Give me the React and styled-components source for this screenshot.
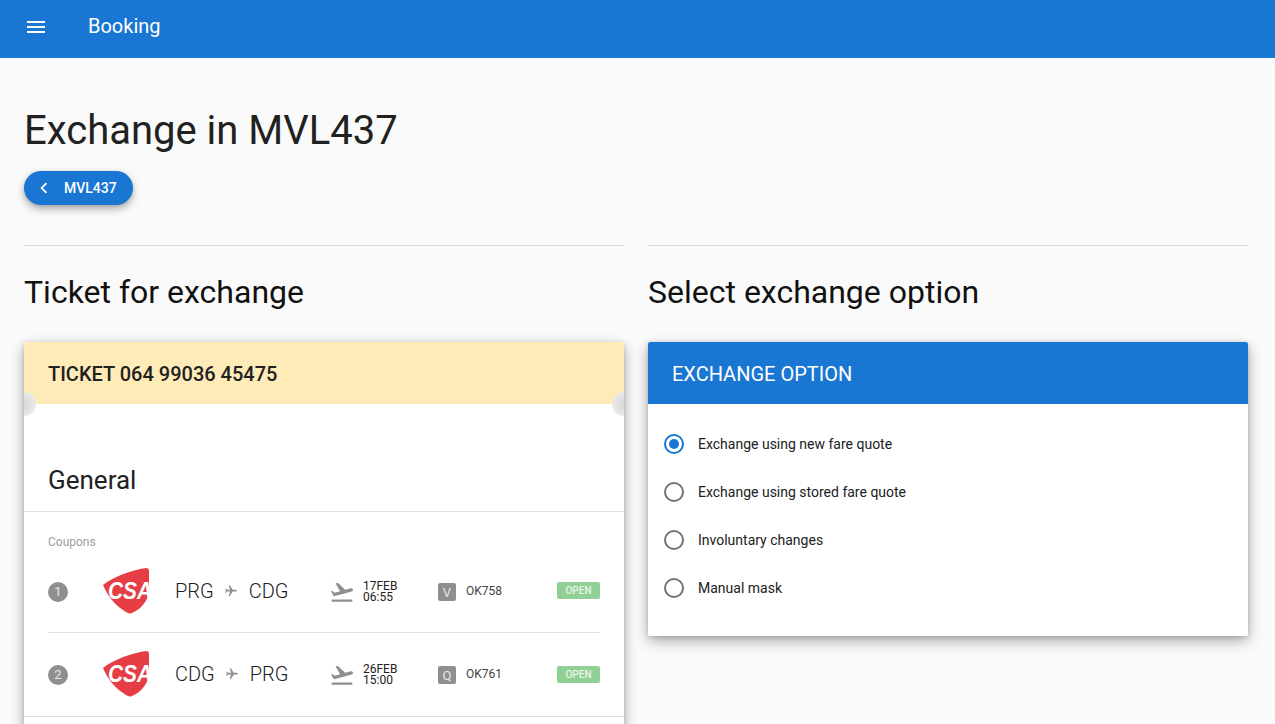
import React from "react";
import styled, { createGlobalStyle } from "styled-components";
import { MdMenu, MdChevronLeft, MdFlight, MdFlightTakeoff } from "react-icons/md";

const coupons = [
  { id: 1, from: "PRG", to: "CDG", date: "17FEB", time: "06:55", cabin: "V", flight: "OK758" },
  { id: 2, from: "CDG", to: "PRG", date: "26FEB", time: "15:00", cabin: "Q", flight: "OK761" },
];

const options = [
  "Exchange using new fare quote",
  "Exchange using stored fare quote",
  "Involuntary changes",
  "Manual mask",
];

const App = () => {
  return (
    <>
      <GlobalStyle />
      <Header>
        <MenuButton>
          <MdMenu size={24} />
        </MenuButton>
        <AppTitle>Booking</AppTitle>
      </Header>
      <Main>
        <PageTitle>Exchange in MVL437</PageTitle>
        <BackButton>
          <MdChevronLeft size={22} />
          MVL437
        </BackButton>
        <Columns>
          <Column>
            <SectionTitle>Ticket for exchange</SectionTitle>
            <Card>
              <TicketHeader>TICKET 064 99036 45475</TicketHeader>
              <Notch $side="left" />
              <Notch $side="right" />
              <CardTitle>General</CardTitle>
              <CouponsLabel>Coupons</CouponsLabel>
              <CouponList>
                {coupons.map((c) => (
                  <CouponRow key={c.id}>
                    <CouponNumber>{c.id}</CouponNumber>
                    <AirlineLogo />
                    <Route>
                      {c.from}
                      <RouteIcon>
                        <MdFlight size={14} />
                      </RouteIcon>
                      {c.to}
                    </Route>
                    <TakeoffIcon>
                      <MdFlightTakeoff size={26} />
                    </TakeoffIcon>
                    <DateTime>
                      {c.date}
                      <br />
                      {c.time}
                    </DateTime>
                    <CabinBox>{c.cabin}</CabinBox>
                    <FlightNo>{c.flight}</FlightNo>
                    <StatusTag>OPEN</StatusTag>
                  </CouponRow>
                ))}
              </CouponList>
              <CardRest />
            </Card>
          </Column>
          <Column>
            <SectionTitle>Select exchange option</SectionTitle>
            <Card>
              <OptionHeader>EXCHANGE OPTION</OptionHeader>
              <OptionList>
                {options.map((label, i) => (
                  <OptionRow key={label}>
                    <Radio $checked={i === 0} />
                    {label}
                  </OptionRow>
                ))}
              </OptionList>
            </Card>
          </Column>
        </Columns>
      </Main>
    </>
  );
};

const AirlineLogo = () => (
  <LogoSvg viewBox="0 0 46 46" width="46" height="46">
    <path
      d="M0 17 C10 9 28 2 43 0 C45 0 46 1 46 3 L46 24 C45 33 37 42 29 45 C27 46 25 45.500 23 44 C13 38 5 29 0 17 Z"
      fill="#e53e44"
    />
    <LogoText x="5" y="31" textLength="44" lengthAdjust="spacingAndGlyphs">
      CSA
    </LogoText>
  </LogoSvg>
);

const GlobalStyle = createGlobalStyle`
  html, body {
    margin: 0;
    height: 724px;
    overflow: hidden;
    background: #fafafa;
    font-family: Roboto, "Liberation Sans", sans-serif;
    color: #212121;
  }
`;

const Header = styled.header`
  height: 58px;
  background: #1976d2;
  color: #fff;
  display: flex;
  align-items: center;
  padding-left: 24px;
`;

const MenuButton = styled.div`
  display: flex;
  width: 64px;
  margin-top: -4px;
`;

const AppTitle = styled.div`
  font-size: 20px;
  margin-top: -6px;
`;

const Main = styled.main`
  padding: 49px 27px 0 24px;
`;

const PageTitle = styled.h1`
  margin: 0;
  font-size: 40px;
  line-height: 48px;
  font-weight: 400;
  color: #212121;
`;

const BackButton = styled.div`
  margin-top: 16px;
  width: 109px;
  height: 34px;
  box-sizing: border-box;
  padding-left: 9px;
  display: flex;
  align-items: center;
  gap: 9px;
  border-radius: 17px;
  background: #1976d2;
  color: #fff;
  font-size: 14px;
  font-weight: 500;
  box-shadow: 0 4px 8px rgba(0, 0, 0, 0.3), 0 1px 3px rgba(0, 0, 0, 0.12);
`;

const Columns = styled.div`
  display: grid;
  grid-template-columns: 600px 600px;
  gap: 24px;
  margin-top: 40px;
`;

const Column = styled.section`
  border-top: 1px solid #dcdcdc;
`;

const SectionTitle = styled.h2`
  margin: 26px 0 30px;
  font-size: 32px;
  line-height: 40px;
  font-weight: 400;
  color: #111;
`;

const Card = styled.div`
  position: relative;
  background: #fff;
  border-radius: 2px;
  box-shadow: 0 5px 14px rgba(0, 0, 0, 0.32), 0 1px 5px rgba(0, 0, 0, 0.14);
`;

const TicketHeader = styled.div`
  height: 62px;
  box-sizing: border-box;
  padding: 1px 24px 0;
  display: flex;
  align-items: center;
  background: #ffebb8;
  border-radius: 2px 2px 0 0;
  font-size: 20px;
  font-weight: 500;
  color: #212121;
`;

const Notch = styled.div`
  position: absolute;
  top: 50px;
  ${({ $side }) => ($side === "left" ? "left: -12px;" : "right: -12px;")}
  width: 24px;
  height: 24px;
  border-radius: 50%;
  background: radial-gradient(circle at center, #d6d6d6 0%, #f2f2f2 100%);
  clip-path: ${({ $side }) =>
    $side === "left" ? "inset(0 0 0 12px)" : "inset(0 12px 0 0)"};
`;

const CardTitle = styled.div`
  height: 108px;
  box-sizing: border-box;
  padding: 59px 24px 0;
  border-bottom: 1px solid #e0e0e0;
  font-size: 26px;
  line-height: 34px;
  color: #212121;
`;

const CouponsLabel = styled.div`
  margin: 23px 24px 0;
  font-size: 12px;
  line-height: 14px;
  color: #9e9e9e;
`;

const CouponList = styled.div`
  margin: 0 24px;
`;

const CouponRow = styled.div`
  height: 84px;
  box-sizing: border-box;
  padding-top: 2px;
  display: grid;
  grid-template-columns: 55px 72px 156px 32px 75px 28px 91px 43px;
  align-items: center;
  &:not(:last-child) {
    border-bottom: 1px solid #e0e0e0;
  }
  &:last-child {
    height: 83px;
    padding-top: 1px;
  }
`;

const CardRest = styled.div`
  height: 24px;
  border-top: 1px solid #e0e0e0;
`;

const CouponNumber = styled.div`
  width: 20px;
  height: 20px;
  border-radius: 50%;
  background: #8f8f8f;
  color: #e8e8e8;
  font-size: 13px;
  line-height: 20px;
  text-align: center;
`;

const LogoSvg = styled.svg`
  display: block;
  margin-top: -2px;
`;

const LogoText = styled.text`
  fill: #fff;
  font-family: "Liberation Sans", sans-serif;
  font-size: 23px;
  font-style: italic;
  font-weight: 700;
`;

const Route = styled.div`
  display: flex;
  align-items: center;
  margin-top: -2px;
  font-size: 20px;
  font-weight: 300;
  color: #212121;
`;

const RouteIcon = styled.span`
  display: flex;
  width: 35px;
  justify-content: center;
  color: #8f8f8f;
  svg {
    transform: rotate(90deg);
  }
`;

const TakeoffIcon = styled.div`
  display: flex;
  margin-left: -2px;
  color: #8f8f8f;
`;

const DateTime = styled.div`
  font-size: 12px;
  line-height: 11px;
  color: #212121;
`;

const CabinBox = styled.div`
  width: 18px;
  height: 18px;
  border-radius: 2px;
  background: #8f8f8f;
  color: #e8e8e8;
  font-size: 13px;
  line-height: 19px;
  text-align: center;
`;

const FlightNo = styled.div`
  margin-top: -2px;
  font-size: 12px;
  color: #424242;
`;

const StatusTag = styled.div`
  height: 17px;
  margin-top: -2px;
  border-radius: 2px;
  background: #90d095;
  color: #e8f5e9;
  font-size: 10px;
  font-weight: 500;
  line-height: 17px;
  text-align: center;
`;

const OptionHeader = styled.div`
  height: 62px;
  box-sizing: border-box;
  padding: 1px 24px 0;
  display: flex;
  align-items: center;
  background: #1976d2;
  border-radius: 2px 2px 0 0;
  color: #fff;
  font-size: 20px;
`;

const OptionList = styled.div`
  padding: 16px 16px 24px;
`;

const OptionRow = styled.label`
  height: 48px;
  display: flex;
  align-items: center;
  gap: 14px;
  font-size: 14px;
  color: #212121;
`;

const Radio = styled.span`
  width: 20px;
  height: 20px;
  box-sizing: border-box;
  border-radius: 50%;
  border: 2px solid ${({ $checked }) => ($checked ? "#1976d2" : "#757575")};
  display: flex;
  align-items: center;
  justify-content: center;
  &::after {
    content: "";
    width: 10px;
    height: 10px;
    border-radius: 50%;
    background: ${({ $checked }) => ($checked ? "#1976d2" : "transparent")};
  }
`;

export default App;
